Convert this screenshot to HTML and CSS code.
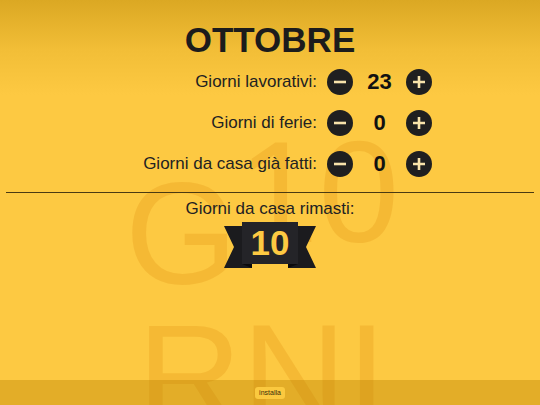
FILE: index.html
```html
<!DOCTYPE html>
<html lang="it">
<head>
<meta charset="utf-8">
<title>Giorni da casa</title>
<link rel="stylesheet" href="styles.css">
</head>
<body>
<div class="page">
  <div class="watermark" aria-hidden="true"><div class="wm-line"><span>G</span><span class="up">10</span></div><div class="wm-line">RNI</div></div>
  <main class="app">
    <h1 class="title">OTTOBRE</h1>
    <div class="counters">
      <div class="label">Giorni lavorativi:</div>
      <button class="circle" aria-label="meno"><svg viewBox="0 0 26 26" width="26" height="26"><circle cx="13" cy="13" r="13" class="c-bg"/><path d="M7 13h12" class="c-ic"/></svg></button>
      <div class="num">23</div>
      <button class="circle" aria-label="più"><svg viewBox="0 0 26 26" width="26" height="26"><circle cx="13" cy="13" r="13" class="c-bg"/><path d="M7 13h12M13 7v12" class="c-ic"/></svg></button>
      <div class="spacer"></div>

      <div class="label">Giorni di ferie:</div>
      <button class="circle" aria-label="meno"><svg viewBox="0 0 26 26" width="26" height="26"><circle cx="13" cy="13" r="13" class="c-bg"/><path d="M7 13h12" class="c-ic"/></svg></button>
      <div class="num">0</div>
      <button class="circle" aria-label="più"><svg viewBox="0 0 26 26" width="26" height="26"><circle cx="13" cy="13" r="13" class="c-bg"/><path d="M7 13h12M13 7v12" class="c-ic"/></svg></button>
      <div class="spacer"></div>

      <div class="label">Giorni da casa già fatti:</div>
      <button class="circle" aria-label="meno"><svg viewBox="0 0 26 26" width="26" height="26"><circle cx="13" cy="13" r="13" class="c-bg"/><path d="M7 13h12" class="c-ic"/></svg></button>
      <div class="num">0</div>
      <button class="circle" aria-label="più"><svg viewBox="0 0 26 26" width="26" height="26"><circle cx="13" cy="13" r="13" class="c-bg"/><path d="M7 13h12M13 7v12" class="c-ic"/></svg></button>
      <div class="spacer"></div>
    </div>
    <hr class="divider">
    <div class="remain-label">Giorni da casa rimasti:</div>
    <div class="ribbon">
      <svg class="ribbon-bg" viewBox="0 0 92 46" width="92" height="46" aria-hidden="true">
        <polygon points="0,4 28,4 28,46 0,46 10,25" fill="#1b1b1e"/>
        <polygon points="92,4 64,4 64,46 92,46 82,25" fill="#1b1b1e"/>
        <polygon points="18,42 28,42 28,46" fill="#0b0b0c"/>
        <polygon points="74,42 64,42 64,46" fill="#0b0b0c"/>
        <rect x="18" y="0" width="56" height="42" fill="#242428"/>
      </svg>
      <span class="ribbon-num">10</span>
    </div>
  </main>
  <footer class="bar"><button class="install">installa</button></footer>
</div>
</body>
</html>
```
FILE: styles.css
```css
html, body {
  margin: 0;
  padding: 0;
}
body {
  width: 540px;
  height: 405px;
  overflow: hidden;
  font-family: "Liberation Sans", Arial, sans-serif;
  color: #222;
  background: linear-gradient(180deg, #dba823 0px, #f2be37 50px, #fdc942 95px, #fdc942 100%);
}
.page {
  position: relative;
  width: 540px;
  height: 405px;
  overflow: hidden;
}
.watermark {
  position: absolute;
  left: 112px;
  top: 164px;
  width: 300px;
  text-align: center;
  font-size: 145px;
  line-height: 141px;
  color: rgba(215, 125, 0, 0.2);
  white-space: nowrap;
  z-index: 0;
}
.wm-line {
  height: 141px;
}
.watermark .up {
  display: inline-block;
  transform: translateY(-42px);
}
.app {
  position: relative;
  z-index: 1;
  display: flex;
  flex-direction: column;
  align-items: center;
}
.title {
  margin: 20px 0 0;
  font-size: 35px;
  line-height: 40px;
  font-weight: 700;
  color: #1c1c1c;
}
.counters {
  margin-top: 1px;
  width: 540px;
  display: grid;
  grid-template-columns: 1fr 26px 53px 26px 108px;
  grid-auto-rows: 41px;
  align-items: center;
}
.label {
  text-align: right;
  padding-right: 10px;
  font-size: 17px;
  color: #222;
}
.circle {
  width: 26px;
  height: 26px;
  padding: 0;
  border: 0;
  background: none;
  display: block;
}
.circle svg {
  display: block;
}
.c-bg {
  fill: #1f1f20;
}
.c-ic {
  stroke: #f8e3ab;
  stroke-width: 2.6;
  fill: none;
}
.num {
  text-align: center;
  font-size: 22px;
  font-weight: 700;
  color: #111;
}
.divider {
  width: 528px;
  margin: 8px 0 0;
  border: 0;
  border-top: 1px solid #4a3a12;
  height: 0;
}
.remain-label {
  margin-top: 6px;
  font-size: 17px;
  line-height: 20px;
  color: #222;
}
.ribbon {
  margin-top: 3px;
  position: relative;
  width: 92px;
  height: 46px;
}
.ribbon-bg {
  position: absolute;
  left: 0;
  top: 0;
}
.ribbon-num {
  position: relative;
  display: flex;
  align-items: center;
  justify-content: center;
  margin-left: 18px;
  width: 56px;
  height: 42px;
  font-size: 35px;
  font-weight: 700;
  color: #fdc942;
}
.bar {
  position: absolute;
  left: 0;
  right: 0;
  bottom: 0;
  height: 25px;
  z-index: 2;
  background: rgba(185, 128, 0, 0.38);
  display: flex;
  align-items: center;
  justify-content: center;
}
.install {
  height: 12px;
  padding: 0 4px;
  border: 0;
  border-radius: 3px;
  background: #fbc93f;
  font-family: "Liberation Sans", Arial, sans-serif;
  font-size: 7px;
  line-height: 12px;
  color: #3a2e0a;
}
```
